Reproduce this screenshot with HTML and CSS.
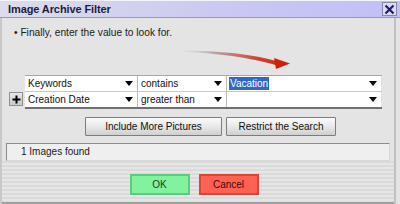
FILE: index.html
```html
<!DOCTYPE html>
<html>
<head>
<meta charset="utf-8">
<link rel="stylesheet" href="styles.css">
</head>
<body>
<div class="window">
  <div class="titlebar">
    <span class="title">Image Archive Filter</span>
    <span class="close"><svg width="11" height="11" viewBox="0 0 11 11"><path d="M1.5 1.5 L9.5 9.5 M9.5 1.5 L1.5 9.5" stroke="#1c1c78" stroke-width="2.2"/></svg></span>
  </div>
  <div class="frame">
    <div class="panel">
      <p class="hint">•&nbsp;Finally, enter the value to look for.</p>
      <svg class="arrow" width="386" height="34" viewBox="3 39 386 34">
        <defs>
          <linearGradient id="ag" x1="175" y1="0" x2="292" y2="0" gradientUnits="userSpaceOnUse">
            <stop offset="0" stop-color="#e4e4e4" stop-opacity="0"/>
            <stop offset="0.35" stop-color="#b8a8a8"/>
            <stop offset="0.75" stop-color="#d04030"/>
            <stop offset="1" stop-color="#d02010"/>
          </linearGradient>
        </defs>
        <path d="M175 47.5 C220 47 255 51 281 58.5 L280 62.5 C255 55 220 49.5 175 48.5 Z" fill="url(#ag)"/>
        <path d="M277 55 L293 60.5 L279 66 Z" fill="#d02010"/>
      </svg>
      <div class="rows">
        <div class="spacer"></div>
        <div class="table">
          <div class="cell c1">Keywords<i class="dd"></i></div>
          <div class="cell c2">contains<i class="dd"></i></div>
          <div class="cell c3"><span class="sel">Vacation</span><i class="dd"></i></div>
        </div>
        <div class="plus"><svg width="9" height="9" viewBox="0 0 9 9"><path d="M4.5 0.5 V8.5 M0.5 4.5 H8.5" stroke="#000" stroke-width="2"/></svg></div>
        <div class="table second">
          <div class="cell c1">Creation Date<i class="dd"></i></div>
          <div class="cell c2">greater than<i class="dd"></i></div>
          <div class="cell c3"><i class="dd"></i></div>
        </div>
      </div>
      <div class="actions">
        <button class="btn b1">Include More Pictures</button>
        <button class="btn b2">Restrict the Search</button>
      </div>
      <div class="status">1 Images found</div>
    </div>
    <div class="footer">
      <button class="fbtn ok">OK</button>
      <button class="fbtn cancel">Cancel</button>
    </div>
  </div>
</div>
</body>
</html>
```
FILE: styles.css
```css
* { box-sizing: border-box; }
html, body { margin: 0; padding: 0; }
body { width: 400px; height: 204px; overflow: hidden; background: #e8e8e8; font-family: "Liberation Sans", Arial, sans-serif; }
.window { width: 400px; height: 204px; display: flex; flex-direction: column; background: #e4e4e4; }
.titlebar {
  height: 18px; flex: none; display: flex; align-items: center; justify-content: space-between;
  background: linear-gradient(to right, #dcdcec 0%, #c8c8f2 60%, #c0c0f6 100%);
  border-top: 1px solid #f4f4fc; border-bottom: 1px solid #9898b8;
  padding: 0 3px 0 8px;
}
.title { font-weight: bold; font-size: 11px; color: #1c1c40; letter-spacing: -0.1px; }
.close {
  width: 15px; height: 14px; display: flex; align-items: center; justify-content: center;
  background: #dcdcec; border: 1px solid #8888a8;
}
.frame {
  flex: 1; display: flex; flex-direction: column;
  border-left: 2px solid #c8c8c8; border-right: 2px solid #c0c0c0;
  margin-right: 4px;
  background: #e4e4e4;
}
.panel { padding: 0 0 0 4px; display: flex; flex-direction: column; }
.hint { margin: 9px 0 0 8px; font-size: 10.2px; color: #202020; line-height: 12px; }
.arrow { display: block; margin-left: -6px; margin-top: 3px; height: 34px; }
.rows { display: grid; grid-template-columns: 14px 357px; column-gap: 2px; margin-left: 3px; margin-top: -1px; }
.table { display: grid; grid-template-columns: 113px 89px 155px; border-top: 1px solid #a8a8a8; background: #fff; }
.table.second { border-top: 1px solid #c8c8c8; border-bottom: 2px solid #707070; }
.cell {
  position: relative; height: 15px; font-size: 10px; line-height: 15px; padding-left: 3px; color: #111;
  border-right: 1px solid #b8b8b8; white-space: nowrap;
}
.c3 { border-right: 1px solid #e0e0e0; padding-left: 2px; }
.sel { background: #3168c4; color: #fff; padding: 1px 1px; }
.dd {
  position: absolute; right: 4px; top: 5px; width: 0; height: 0;
  border-left: 4px solid transparent; border-right: 4px solid transparent; border-top: 5px solid #000;
}
.plus {
  width: 14px; height: 14px; margin-top: 1px; display: flex; align-items: center; justify-content: center;
  background: linear-gradient(#e8e8e8, #c8c8c8); border: 1px solid #909090;
}
.actions { display: flex; gap: 4px; margin: 8px 0 0 79px; }
.btn {
  height: 19px; padding: 0; font-family: inherit; font-size: 10px; color: #101010;
  background: linear-gradient(#fbfbfb, #e8e8e8 50%, #cfcfcf); border: 1px solid #7c7c7c; border-radius: 1px;
}
.b1 { width: 137px; }
.b2 { width: 110px; }
.status {
  margin: 7px 0 0 0; height: 18px; width: 384px; font-size: 10px; line-height: 16px; padding-left: 14px; color: #1a1a1a;
  background: #efefef; border: 1px solid #8c8c8c; border-right-color: #d8d8d8; border-bottom-color: #d8d8d8;
}
.footer {
  flex: 1; display: flex; justify-content: center; align-items: flex-start; gap: 9px; padding-top: 13px; padding-right: 8px;
  background: repeating-linear-gradient(#dadada 0 2px, #e6e6e6 2px 4px);
  border-bottom: 2px solid #a0a0a0;
}
.fbtn { width: 60px; height: 21px; font-family: inherit; font-size: 10px; padding: 0; }
.ok { background: #82f29e; border: 2px solid #5ccc7c; color: #1a4020; }
.cancel { background: #ff6252; border: 2px solid #dc4436; color: #400a08; }
```
